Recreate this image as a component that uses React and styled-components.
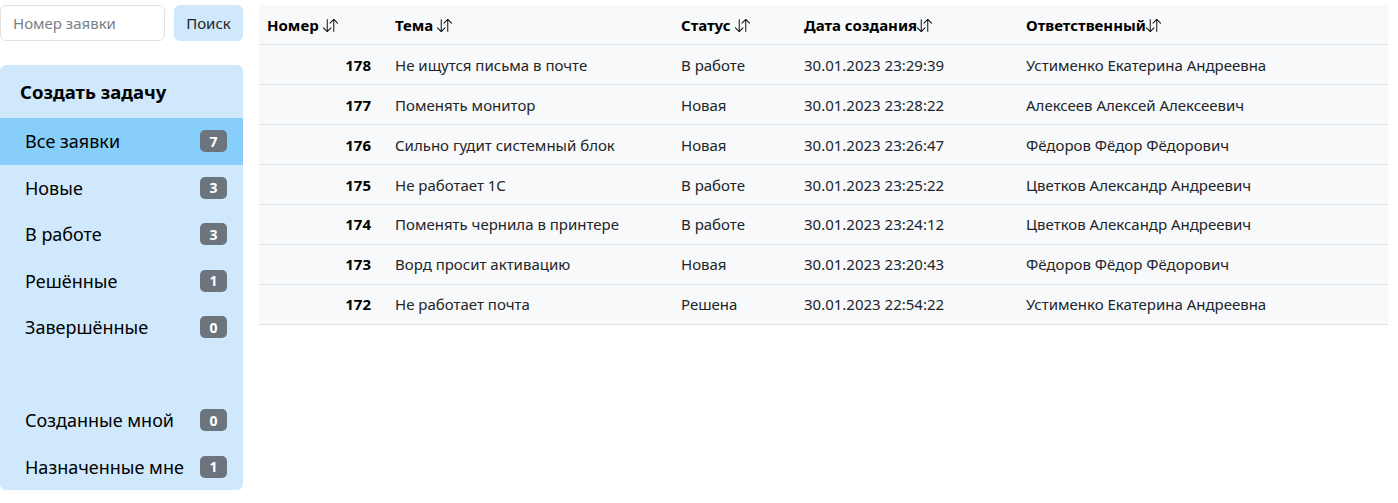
import React from "react";
import styled, { createGlobalStyle } from "styled-components";

/* ========== STYLES ========== */

const GlobalStyle = createGlobalStyle`
  body {
    margin: 0;
    background: #ffffff;
    font-family: "Noto Sans", "Open Sans", Arial, sans-serif;
    color: #212529;
  }
  * { box-sizing: border-box; }
`;

const Page = styled.div`
  display: flex;
  align-items: flex-start;
  gap: 16px;
  padding: 5px 10px 0 0;
`;

const Sidebar = styled.aside`
  width: 243px;
  flex-shrink: 0;
  display: flex;
  flex-direction: column;
  gap: 24px;
`;

const SearchRow = styled.form`
  display: flex;
  gap: 9px;
  height: 36px;
`;

const SearchInput = styled.input`
  width: 165px;
  height: 36px;
  border: 1px solid #dee2e6;
  border-radius: 6px;
  padding: 0 12px;
  font-family: inherit;
  font-size: 15px;
  color: #212529;
  outline: none;

  &::placeholder {
    color: #7a7f85;
  }
`;

const SearchButton = styled.button`
  flex: 1;
  border: none;
  border-radius: 6px;
  background: #cfe8fc;
  font-family: inherit;
  font-size: 15px;
  color: #212529;
  cursor: pointer;
`;

const Panel = styled.nav`
  background: #cfe8fc;
  border-radius: 6px;
  overflow: hidden;
  display: flex;
  flex-direction: column;
`;

const PanelTitle = styled.div`
  height: 53px;
  display: flex;
  align-items: center;
  padding-left: 20px;
  font-size: 18.5px;
  font-weight: 700;
  color: #000;
`;

const MenuItem = styled.a`
  height: 46.5px;
  display: flex;
  align-items: center;
  justify-content: space-between;
  padding: 0 16px 0 25px;
  font-size: 18px;
  color: #000;
  text-decoration: none;
  background: ${({ $active }) => ($active ? "#87cefa" : "transparent")};
  cursor: pointer;
`;

const Spacer = styled.div`
  height: 46.5px;
`;

const Badge = styled.span`
  min-width: 27px;
  height: 22px;
  padding: 0 8px;
  border-radius: 5px;
  background: #6c757d;
  color: #fff;
  font-size: 14px;
  font-weight: 700;
  display: inline-flex;
  align-items: center;
  justify-content: center;
`;

const Table = styled.table`
  width: 1129px;
  table-layout: fixed;
  border-collapse: collapse;
  background: #f8f9fa;
  font-size: 15px;
`;

const Col = styled.col`
  width: ${({ $w }) => $w}px;
`;

const Th = styled.th`
  height: 39.9px;
  padding: 0 8px;
  text-align: left;
  font-weight: 700;
  color: #000;
  border-bottom: 1px solid #dee2e6;
  white-space: nowrap;
`;

const Td = styled.td`
  height: 39.9px;
  padding: ${({ $num }) => ($num ? "0 16px 0 8px" : "0 8px")};
  text-align: ${({ $num }) => ($num ? "right" : "left")};
  font-weight: ${({ $num }) => ($num ? 700 : 400)};
  color: ${({ $num }) => ($num ? "#000" : "#212529")};
  border-bottom: 1px solid #dee2e6;
  white-space: nowrap;
`;

const SortIcon = styled.svg`
  width: 15px;
  height: 15px;
  vertical-align: -2px;
  margin-left: ${({ $gap }) => ($gap ? "4px" : "0")};
`;

/* ========== DATA ========== */

const menu = [
  { label: "Все заявки", count: 7, active: true },
  { label: "Новые", count: 3 },
  { label: "В работе", count: 3 },
  { label: "Решённые", count: 1 },
  { label: "Завершённые", count: 0 },
];

const personal = [
  { label: "Созданные мной", count: 0 },
  { label: "Назначенные мне", count: 1 },
];

const columns = [
  { title: "Номер", width: 128, gap: true },
  { title: "Тема", width: 286, gap: true },
  { title: "Статус", width: 123, gap: true },
  { title: "Дата создания", width: 222 },
  { title: "Ответственный", width: 370 },
];

const rows = [
  [178, "Не ищутся письма в почте", "В работе", "30.01.2023 23:29:39", "Устименко Екатерина Андреевна"],
  [177, "Поменять монитор", "Новая", "30.01.2023 23:28:22", "Алексеев Алексей Алексеевич"],
  [176, "Сильно гудит системный блок", "Новая", "30.01.2023 23:26:47", "Фёдоров Фёдор Фёдорович"],
  [175, "Не работает 1С", "В работе", "30.01.2023 23:25:22", "Цветков Александр Андреевич"],
  [174, "Поменять чернила в принтере", "В работе", "30.01.2023 23:24:12", "Цветков Александр Андреевич"],
  [173, "Ворд просит активацию", "Новая", "30.01.2023 23:20:43", "Фёдоров Фёдор Фёдорович"],
  [172, "Не работает почта", "Решена", "30.01.2023 22:54:22", "Устименко Екатерина Андреевна"],
];

/* ========== COMPONENT ========== */

const ArrowDownUp = ({ gap }) => (
  <SortIcon $gap={gap} viewBox="0 0 16 16" fill="currentColor">
    <path
      fillRule="evenodd"
      d="M11.5 15a.5.5 0 0 0 .5-.5V2.707l3.146 3.147a.5.5 0 0 0 .708-.708l-4-4a.5.5 0 0 0-.708 0l-4 4a.5.5 0 1 0 .708.708L11 2.707V14.5a.5.5 0 0 0 .5.5zm-7-14a.5.5 0 0 1 .5.5v11.793l3.146-3.147a.5.5 0 0 1 .708.708l-4 4a.5.5 0 0 1-.708 0l-4-4a.5.5 0 0 1 .708-.708L4 13.293V1.5a.5.5 0 0 1 .5-.5z"
    />
  </SortIcon>
);

const App = () => {
  return (
    <>
      <GlobalStyle />
      <Page>
        <Sidebar>
          <SearchRow onSubmit={(e) => e.preventDefault()}>
            <SearchInput placeholder="Номер заявки" />
            <SearchButton type="submit">Поиск</SearchButton>
          </SearchRow>

          <Panel>
            <PanelTitle>Создать задачу</PanelTitle>
            {menu.map((item) => (
              <MenuItem key={item.label} $active={item.active}>
                {item.label}
                <Badge>{item.count}</Badge>
              </MenuItem>
            ))}
            <Spacer />
            {personal.map((item) => (
              <MenuItem key={item.label}>
                {item.label}
                <Badge>{item.count}</Badge>
              </MenuItem>
            ))}
          </Panel>
        </Sidebar>

        <Table>
          <colgroup>
            {columns.map((c) => (
              <Col key={c.title} $w={c.width} />
            ))}
          </colgroup>
          <thead>
            <tr>
              {columns.map((c) => (
                <Th key={c.title}>
                  {c.title}
                  <ArrowDownUp gap={c.gap} />
                </Th>
              ))}
            </tr>
          </thead>
          <tbody>
            {rows.map((r) => (
              <tr key={r[0]}>
                <Td $num>{r[0]}</Td>
                <Td>{r[1]}</Td>
                <Td>{r[2]}</Td>
                <Td>{r[3]}</Td>
                <Td>{r[4]}</Td>
              </tr>
            ))}
          </tbody>
        </Table>
      </Page>
    </>
  );
};

export default App;
